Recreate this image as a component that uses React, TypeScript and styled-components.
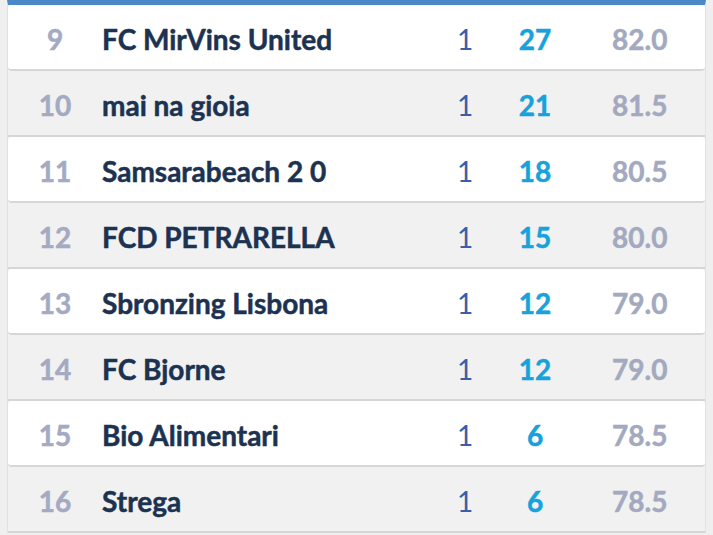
import styled, { createGlobalStyle } from "styled-components";

const GlobalStyle = createGlobalStyle`
  html, body {
    margin: 0;
    padding: 0;
    background: #efefef;
    font-family: Lato, "Noto Sans", sans-serif;
  }
`;

interface IRow {
  striped: boolean
}

const Page = styled.div`
  width: 713px;
  height: 535px;
  overflow: hidden;
  padding: 0 7px;
  box-sizing: border-box;
`;

const Table = styled.div`
  border-top: 5px solid #4a88c7;
  border-left: 1px solid #e2e2e2;
  border-right: 1px solid #e2e2e2;
  background: #f1f1f1;
`;

const Row = styled.div<IRow>`
  display: grid;
  grid-template-columns: 94px 330px 56px 94px 1fr;
  align-items: center;
  height: 66px;
  border-bottom: 2px solid #d6d6d6;
  background: ${props => (props.striped ? "#f1f1f1" : "#ffffff")};
  border-radius: ${props => (props.striped ? "0" : "4px")};
  padding-top: 3px;
  box-sizing: border-box;
  -webkit-text-stroke: 0.5px currentColor;
`;

const Rank = styled.span`
  text-align: center;
  font-size: 28px;
  font-weight: 700;
  color: #a3aac2;
`;

const Name = styled.span`
  font-size: 28px;
  font-weight: 700;
  color: #1b3251;
`;

const Played = styled.span`
  text-align: center;
  padding-left: 10px;
  font-size: 28px;
  font-weight: 400;
  color: #3b5ea8;
  -webkit-text-stroke: 0;
`;

const Points = styled.span`
  text-align: center;
  font-size: 28px;
  font-weight: 700;
  color: #17a2dc;
`;

const Value = styled.span`
  padding-left: 30px;
  font-size: 28px;
  font-weight: 700;
  color: #a3a9bf;
`;

const teams = [
  { rank: 9, name: "FC MirVins United", played: 1, points: 27, value: "82.0" },
  { rank: 10, name: "mai na gioia", played: 1, points: 21, value: "81.5" },
  { rank: 11, name: "Samsarabeach 2 0", played: 1, points: 18, value: "80.5" },
  { rank: 12, name: "FCD PETRARELLA", played: 1, points: 15, value: "80.0" },
  { rank: 13, name: "Sbronzing Lisbona", played: 1, points: 12, value: "79.0" },
  { rank: 14, name: "FC Bjorne", played: 1, points: 12, value: "79.0" },
  { rank: 15, name: "Bio Alimentari", played: 1, points: 6, value: "78.5" },
  { rank: 16, name: "Strega", played: 1, points: 6, value: "78.5" },
];

const App = () => {
  return (
    <Page>
      <GlobalStyle />
      <Table>
        {teams.map((team, i) => (
          <Row striped={i % 2 === 1} key={team.rank}>
            <Rank>{team.rank}</Rank>
            <Name>{team.name}</Name>
            <Played>{team.played}</Played>
            <Points>{team.points}</Points>
            <Value>{team.value}</Value>
          </Row>
        ))}
      </Table>
    </Page>
  )
}

export default App
